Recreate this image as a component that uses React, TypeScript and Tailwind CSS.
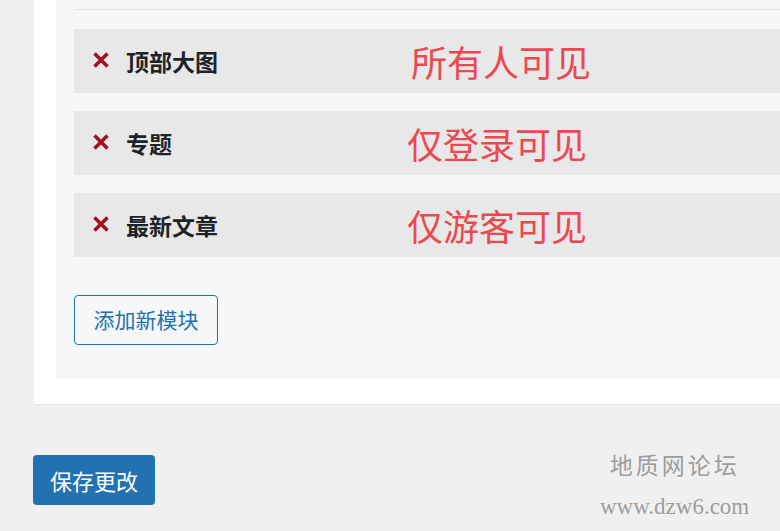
import React from "react";

const modules = [
  { title: "顶部大图", note: "所有人可见", offset: "left-[337px]" },
  { title: "专题", note: "仅登录可见", offset: "left-[333px]" },
  { title: "最新文章", note: "仅游客可见", offset: "left-[333px]" },
];

const cjk = "font-['Noto_Sans_CJK_SC','Noto_Sans',sans-serif]";

function RemoveIcon() {
  return (
    <svg width="18" height="18" viewBox="0 0 18 18" className="shrink-0">
      <path d="M2.5 2.5 L15.5 15.5 M15.5 2.5 L2.5 15.5" stroke="#a3121f" strokeWidth="3.6" fill="none" />
    </svg>
  );
}

export default function App() {
  return (
    <div className={`relative w-[780px] h-[531px] overflow-hidden bg-[#f0f0f1] ${cjk}`}>
      {/* WHITE CARD */}
      <div className="ml-[34px] bg-white pl-[22px] pb-[25px] shadow-[0_1px_1px_rgba(0,0,0,0.06)]">
        {/* MODULE LIST PANEL */}
        <div className="bg-[#f6f7f8] pl-[18px] pt-[9px] pb-[34px]">
          <div className="border-t border-[#e2e4e7]" />

          <div className="mt-[19px] flex flex-col gap-[18px]">
            {modules.map((m) => (
              <div key={m.title} className="relative flex h-[64px] items-center bg-[#e8e8e8] pl-[18px]">
                <div className="-mt-[3px]">
                  <RemoveIcon />
                </div>
                <span className="ml-[16px] text-[23px] font-bold leading-none text-[#1d2327]">{m.title}</span>
                <span className={`absolute ${m.offset} top-1/2 -translate-y-1/2 text-[36px] leading-none text-[#ec4850]`}>
                  {m.note}
                </span>
              </div>
            ))}
          </div>

          <button className="mt-[38px] h-[50px] w-[144px] rounded-[4px] border border-[#2271b1] bg-[#f6f7f8] text-[21px] text-[#2271b1]">
            添加新模块
          </button>
        </div>
      </div>

      {/* SAVE */}
      <button className="ml-[33px] mt-[51px] h-[50px] w-[122px] rounded-[4px] bg-[#2271b1] text-[22px] text-white">
        保存更改
      </button>

      {/* WATERMARK */}
      <div className="absolute left-[600px] top-[452px] flex flex-col items-center text-[#9d9d9d]">
        <span className="text-[23px] leading-[30px] tracking-[3px] font-['Liberation_Serif','Noto_Sans_CJK_SC',serif]">地质网论坛</span>
        <span className="mt-[12px] text-[23px] leading-[26px] font-['Liberation_Serif',serif]">www.dzw6.com</span>
      </div>
    </div>
  );
}
